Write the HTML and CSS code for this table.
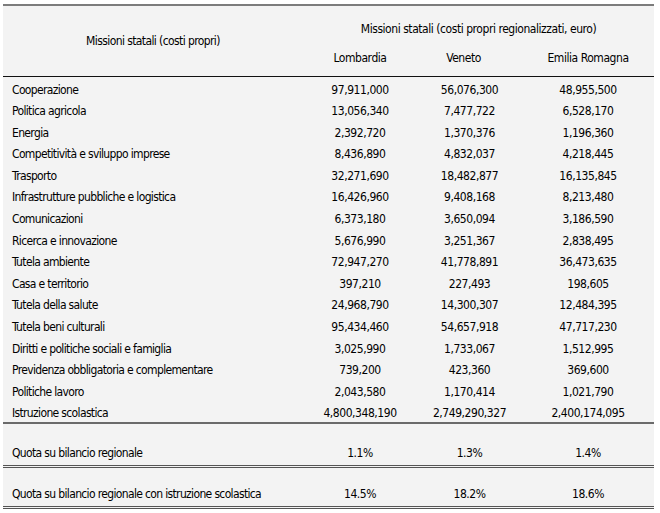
FILE: index.html
```html
<!DOCTYPE html>
<html lang="it">
<head>
<meta charset="utf-8">
<title>Missioni statali</title>
<link rel="stylesheet" href="styles.css">
</head>
<body>
<table class="tbl">
  <colgroup>
    <col class="c-label">
    <col class="c-lom">
    <col class="c-ven">
    <col class="c-emi">
  </colgroup>
  <thead>
    <tr class="h1">
      <th class="h-label" rowspan="2">Missioni statali (costi propri)</th>
      <th class="h-group" colspan="3">Missioni statali (costi propri regionalizzati, euro)</th>
    </tr>
    <tr class="h2">
      <th>Lombardia</th>
      <th class="h-ven">Veneto</th>
      <th>Emilia Romagna</th>
    </tr>
  </thead>
  <tbody class="rows">
    <tr><td>Cooperazione</td><td>97,911,000</td><td>56,076,300</td><td>48,955,500</td></tr>
    <tr><td>Politica agricola</td><td>13,056,340</td><td>7,477,722</td><td>6,528,170</td></tr>
    <tr><td>Energia</td><td>2,392,720</td><td>1,370,376</td><td>1,196,360</td></tr>
    <tr><td>Competitività e sviluppo imprese</td><td>8,436,890</td><td>4,832,037</td><td>4,218,445</td></tr>
    <tr><td>Trasporto</td><td>32,271,690</td><td>18,482,877</td><td>16,135,845</td></tr>
    <tr><td>Infrastrutture pubbliche e logistica</td><td>16,426,960</td><td>9,408,168</td><td>8,213,480</td></tr>
    <tr><td>Comunicazioni</td><td>6,373,180</td><td>3,650,094</td><td>3,186,590</td></tr>
    <tr><td>Ricerca e innovazione</td><td>5,676,990</td><td>3,251,367</td><td>2,838,495</td></tr>
    <tr><td>Tutela ambiente</td><td>72,947,270</td><td>41,778,891</td><td>36,473,635</td></tr>
    <tr><td>Casa e territorio</td><td>397,210</td><td>227,493</td><td>198,605</td></tr>
    <tr><td>Tutela della salute</td><td>24,968,790</td><td>14,300,307</td><td>12,484,395</td></tr>
    <tr><td>Tutela beni culturali</td><td>95,434,460</td><td>54,657,918</td><td>47,717,230</td></tr>
    <tr><td>Diritti e politiche sociali e famiglia</td><td>3,025,990</td><td>1,733,067</td><td>1,512,995</td></tr>
    <tr><td>Previdenza obbligatoria e complementare</td><td>739,200</td><td>423,360</td><td>369,600</td></tr>
    <tr><td>Politiche lavoro</td><td>2,043,580</td><td>1,170,414</td><td>1,021,790</td></tr>
    <tr class="last"><td>Istruzione scolastica</td><td>4,800,348,190</td><td>2,749,290,327</td><td>2,400,174,095</td></tr>
  </tbody>
  <tbody class="quota">
    <tr class="q1"><td>Quota su bilancio regionale</td><td>1.1%</td><td>1.3%</td><td>1.4%</td></tr>
    <tr class="q2"><td>Quota su bilancio regionale con istruzione scolastica</td><td>14.5%</td><td>18.2%</td><td>18.6%</td></tr>
  </tbody>
</table>
</body>
</html>
```

FILE: styles.css
```css
html, body {
  margin: 0;
  padding: 0;
  background: #ffffff;
}

body {
  padding: 4px 0 0 3px;
  font-family: "DejaVu Sans Condensed", "DejaVu Sans", sans-serif;
  font-stretch: condensed;
  font-size: 12px;
  letter-spacing: -0.45px;
  color: #000;
}

.tbl {
  width: 651px;
  border-collapse: collapse;
  table-layout: fixed;
  background: #f3f3f3;
  border-top: 2px solid #7c7c7c;
}

.c-label { width: 300px; }
.c-lom { width: 114px; }
.c-ven { width: 105px; }
.c-emi { width: 132px; }

.tbl th {
  font-weight: normal;
  line-height: 14px;
  padding: 0;
  text-align: center;
}

.h1 th.h-group {
  height: 42px;
  padding-top: 4px;
  vertical-align: middle;
  box-sizing: border-box;
}

.h-label {
  vertical-align: middle;
  padding-top: 2px;
  letter-spacing: -0.6px;
  border-bottom: 1px solid #111;
}

.h2 th {
  height: 29px;
  box-sizing: border-box;
  padding-top: 4px;
  vertical-align: top;
  border-bottom: 1px solid #111;
}

.h2 th.h-ven {
  padding-right: 12px;
}

.tbl td {
  line-height: 14px;
  text-align: center;
  padding: 0;
  white-space: nowrap;
}

.tbl td:first-child {
  text-align: left;
  padding-left: 9px;
  letter-spacing: -0.65px;
}

.rows td {
  height: 21.6px;
  box-sizing: border-box;
  padding-top: 6px;
  padding-bottom: 1.6px;
  vertical-align: top;
}

.rows tr.last td {
  border-bottom: 2px solid #6a6a6a;
}

.quota td {
  vertical-align: bottom;
  padding-bottom: 5px;
  box-sizing: border-box;
  border-bottom: 3px double #555;
}

.quota .q1 td { height: 43px; }
.quota .q2 td { height: 41px; }
```
